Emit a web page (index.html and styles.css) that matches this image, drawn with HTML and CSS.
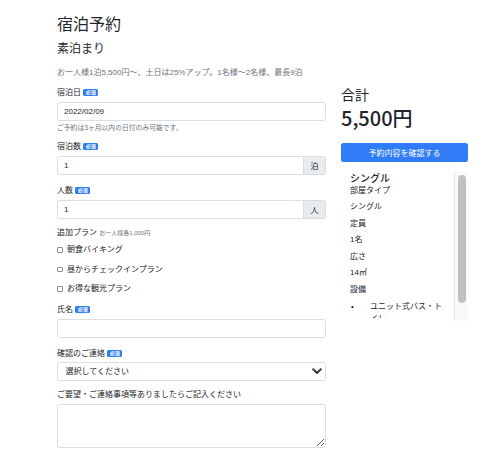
FILE: index.html
```html
<!DOCTYPE html>
<html lang="ja">
<head>
<meta charset="utf-8">
<title>宿泊予約</title>
<link rel="stylesheet" href="styles.css">
</head>
<body>
<div class="page">
  <main class="form-col">
    <h1 class="title">宿泊予約</h1>
    <h2 class="plan">素泊まり</h2>
    <p class="lead">お一人様1泊5,500円〜、土日は25%アップ。1名様〜2名様、最長9泊</p>

    <div class="group g-date">
      <label class="label">宿泊日 <span class="badge">必須</span></label>
      <input class="control" type="text" value="2022/02/09">
      <div class="help">ご予約は3ヶ月以内の日付のみ可能です。</div>
    </div>

    <div class="group g-nights">
      <label class="label">宿泊数 <span class="badge">必須</span></label>
      <div class="input-group">
        <input class="control grow" type="text" value="1">
        <span class="addon">泊</span>
      </div>
    </div>

    <div class="group g-people">
      <label class="label">人数 <span class="badge">必須</span></label>
      <div class="input-group">
        <input class="control grow" type="text" value="1">
        <span class="addon">人</span>
      </div>
    </div>

    <div class="group g-options">
      <label class="label">追加プラン <small class="note">お一人様各1,000円</small></label>
      <div class="checks">
        <label class="check-row"><input class="check" type="checkbox">朝食バイキング</label>
        <label class="check-row"><input class="check" type="checkbox">昼からチェックインプラン</label>
        <label class="check-row"><input class="check" type="checkbox">お得な観光プラン</label>
      </div>
    </div>

    <div class="group g-name">
      <label class="label">氏名 <span class="badge">必須</span></label>
      <input class="control" type="text">
    </div>

    <div class="group g-contact">
      <label class="label">確認のご連絡 <span class="badge">必須</span></label>
      <div class="select-wrap">
        <select class="control select">
          <option>選択してください</option>
        </select>
        <svg class="chevron" width="10" height="7" viewBox="0 0 10 7"><path d="M1.2 1.3 L5 5 L8.8 1.3" fill="none" stroke="#343a40" stroke-width="2" stroke-linecap="round" stroke-linejoin="round"/></svg>
      </div>
    </div>

    <div class="group g-request">
      <label class="label">ご要望・ご連絡事項等ありましたらご記入ください</label>
      <textarea class="control area"></textarea>
    </div>
  </main>

  <aside class="summary">
    <h3 class="sum-label">合計</h3>
    <div class="sum-total">5,500円</div>
    <button class="btn" type="button">予約内容を確認する</button>
    <div class="rooms">
      <div class="rooms-body">
        <h5 class="room-name">シングル</h5>
        <div class="spec">部屋タイプ</div>
        <div class="spec">シングル</div>
        <div class="spec">定員</div>
        <div class="spec">1名</div>
        <div class="spec">広さ</div>
        <div class="spec">14㎡</div>
        <div class="spec">設備</div>
        <ul class="amenities">
          <li>ユニット式バス・トイレ</li>
        </ul>
      </div>
      <div class="scrollbar"><div class="thumb"></div></div>
    </div>
  </aside>
</div>
</body>
</html>
```
FILE: styles.css
```css
* { box-sizing: border-box; }

body {
  margin: 0;
  background: #fff;
  color: #212529;
  font-family: "Liberation Sans", "Noto Sans CJK JP", sans-serif;
}

.page {
  display: grid;
  grid-template-columns: 269px 127px;
  column-gap: 15px;
  padding-left: 57px;
  align-items: start;
}

.title {
  margin: 15px 0 0;
  font-size: 16px;
  line-height: 19px;
  font-weight: 400;
}

.plan {
  margin: 7.5px 0 0;
  font-size: 12px;
  line-height: 14.5px;
  font-weight: 400;
}

.lead {
  margin: 11px 0 0;
  font-size: 8px;
  line-height: 12px;
  color: #6c757d;
}

.group { display: flex; flex-direction: column; }
.g-date { margin-top: 8px; }
.g-nights { margin-top: 8px; }
.g-people { margin-top: 10px; }
.g-options { margin-top: 8px; }
.g-name { margin-top: 9px; }
.g-contact { margin-top: 10px; }
.g-request { margin-top: 8px; }

.label {
  display: block;
  font-size: 8px;
  line-height: 12px;
  margin-bottom: 3px;
  color: #212529;
}

.badge {
  display: inline-block;
  font-size: 5px;
  line-height: 5px;
  padding: 1px 2.5px;
  border-radius: 1.5px;
  background: #2f7cf6;
  color: #fff;
  font-weight: 700;
  vertical-align: 1px;
}

.note {
  font-size: 6px;
  color: #6c757d;
}

.control {
  display: block;
  width: 100%;
  height: 19px;
  margin: 0;
  padding: 0 6px;
  font-family: inherit;
  font-size: 8px;
  line-height: 17px;
  color: #212529;
  background: #fff;
  border: 1px solid #dadde1;
  border-radius: 2.5px;
  outline: none;
}

.help {
  margin-top: 2px;
  font-size: 6.8px;
  line-height: 10px;
  color: #6c757d;
}

.input-group { display: flex; }
.grow { flex: 1; width: auto; border-radius: 2.5px 0 0 2.5px; }
.addon {
  flex: 0 0 23px;
  margin-left: -1px;
  height: 19px;
  display: flex;
  align-items: center;
  justify-content: center;
  font-size: 8px;
  color: #212529;
  background: #e9ecef;
  border: 1px solid #dadde1;
  border-radius: 0 2.5px 2.5px 0;
}

.checks { display: flex; flex-direction: column; gap: 7.5px; margin-top: 2px; }
.check-row {
  display: flex;
  align-items: center;
  font-size: 8px;
  line-height: 12px;
}
.check {
  appearance: none;
  -webkit-appearance: none;
  width: 5.5px;
  height: 5.5px;
  margin: 0 4.5px 0 0;
  border: 1px solid #8d8d8d;
  border-radius: 1px;
  background: #fff;
}

.select-wrap { position: relative; margin-top: -1px; }
.select {
  appearance: none;
  -webkit-appearance: none;
  padding-left: 7.5px;
}
.chevron {
  position: absolute;
  right: 4px;
  top: 6px;
}

.area {
  height: 44px;
  resize: vertical;
}

.summary {
  padding-top: 87px;
  display: flex;
  flex-direction: column;
}

.sum-label {
  margin: 0;
  font-size: 14px;
  line-height: 17px;
  font-weight: 400;
}

.sum-total {
  margin-top: 2px;
  font-family: "Noto Sans CJK JP", sans-serif;
  font-size: 20px;
  line-height: 24px;
  font-weight: 500;
}

.btn {
  margin-top: 13px;
  height: 19px;
  width: 100%;
  border: none;
  border-radius: 2.5px;
  background: #2f7cf6;
  color: #fff;
  font-family: inherit;
  font-size: 8px;
  padding: 0;
}

.rooms {
  margin-top: 9px;
  height: 150px;
  display: flex;
  align-items: flex-start;
}

.rooms-body {
  flex: 1;
  min-width: 0;
  height: 147px;
  overflow: hidden;
  padding: 1.5px 8px 0 9px;
}

.scrollbar {
  flex: 0 0 14px;
  align-self: stretch;
  background: #fafafa;
  border-left: 1px solid #e8e8e8;
  padding: 3.5px 2px 0 3px;
}

.thumb {
  height: 128px;
  background: #c1c1c1;
  border-radius: 4px;
}

.room-name {
  margin: 0;
  font-size: 10px;
  line-height: 12px;
  font-weight: 500;
}

.spec {
  font-size: 8px;
  line-height: 12px;
  margin-bottom: 4.6px;
}

.amenities {
  margin: 0;
  padding: 0;
  list-style: none;
}
.amenities li {
  display: flex;
  font-size: 8px;
  line-height: 12px;
}
.amenities li::before {
  content: "•";
  flex: 0 0 19px;
  padding-left: 1px;
}
```
